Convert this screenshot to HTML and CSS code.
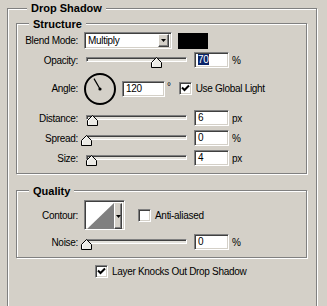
FILE: index.html
```html
<!DOCTYPE html>
<html lang="en">
<head>
    <meta charset="UTF-8">
    <title>Drop Shadow</title>
    <link rel="stylesheet" href="styles.css">
</head>
<body>
    <div class="group outer">
        <div class="group-title">Drop Shadow</div>

        <div class="group structure">
            <div class="group-title">Structure</div>

            <div class="row row-blend">
                <span class="lbl">Blend Mode:</span>
                <div class="select">
                    <span class="select-text">Multiply</span>
                    <span class="drop-btn"><svg width="5" height="3" viewBox="0 0 5 3"><path d="M0 0h5L2.5 3z" fill="#000"/></svg></span>
                </div>
                <div class="swatch"></div>
            </div>

            <div class="row row-opacity">
                <span class="lbl">Opacity:</span>
                <div class="slider">
                    <div class="track"></div>
                    <svg class="thumb" style="left: 65px" width="11" height="11" viewBox="0 0 11 11"><path d="M0.5 10.5V5.5L5.5 0.5L10.5 5.5V10.5Z" fill="#ecebe6" stroke="#000"/><path d="M1.5 9.5V5.9L5.5 1.9" fill="none" stroke="#fff"/></svg>
                </div>
                <div class="field"><span class="sel">70</span></div>
                <span class="unit">%</span>
            </div>

            <div class="row row-angle">
                <span class="lbl">Angle:</span>
                <svg class="dial" width="34" height="34" viewBox="0 0 34 34">
                    <circle cx="17" cy="17" r="15" fill="none" stroke="#000" stroke-width="2"/>
                    <line x1="17" y1="17" x2="11" y2="6.6" stroke="#000" stroke-width="1.2"/>
                    <circle cx="17" cy="17" r="1.6" fill="#000"/>
                </svg>
                <div class="field field-wide">120</div>
                <span class="deg">°</span>
                <span class="check check-global"><svg width="9" height="9" viewBox="0 0 9 9"><path d="M1 3.5L3.5 6L8 1.5" fill="none" stroke="#000" stroke-width="2"/></svg></span>
                <span class="check-label">Use Global Light</span>
            </div>

            <div class="row row-distance">
                <span class="lbl">Distance:</span>
                <div class="slider">
                    <div class="track"></div>
                    <svg class="thumb" style="left: 1px" width="11" height="11" viewBox="0 0 11 11"><path d="M0.5 10.5V5.5L5.5 0.5L10.5 5.5V10.5Z" fill="#ecebe6" stroke="#000"/><path d="M1.5 9.5V5.9L5.5 1.9" fill="none" stroke="#fff"/></svg>
                </div>
                <div class="field">6</div>
                <span class="unit">px</span>
            </div>

            <div class="row row-spread">
                <span class="lbl">Spread:</span>
                <div class="slider">
                    <div class="track"></div>
                    <svg class="thumb" style="left: -5px" width="11" height="11" viewBox="0 0 11 11"><path d="M0.5 10.5V5.5L5.5 0.5L10.5 5.5V10.5Z" fill="#ecebe6" stroke="#000"/><path d="M1.5 9.5V5.9L5.5 1.9" fill="none" stroke="#fff"/></svg>
                </div>
                <div class="field">0</div>
                <span class="unit">%</span>
            </div>

            <div class="row row-size">
                <span class="lbl">Size:</span>
                <div class="slider">
                    <div class="track"></div>
                    <svg class="thumb" style="left: 0px" width="11" height="11" viewBox="0 0 11 11"><path d="M0.5 10.5V5.5L5.5 0.5L10.5 5.5V10.5Z" fill="#ecebe6" stroke="#000"/><path d="M1.5 9.5V5.9L5.5 1.9" fill="none" stroke="#fff"/></svg>
                </div>
                <div class="field">4</div>
                <span class="unit">px</span>
            </div>
        </div>

        <div class="group quality">
            <div class="group-title">Quality</div>

            <div class="row row-contour">
                <span class="lbl">Contour:</span>
                <div class="contour">
                    <svg class="curve" width="27" height="26" viewBox="0 0 27 26"><rect width="27" height="26" fill="#fff"/><path d="M0 26L27 0V26Z" fill="#808080"/></svg>
                    <span class="contour-btn"><svg width="5" height="3" viewBox="0 0 5 3"><path d="M0 0h5L2.5 3z" fill="#000"/></svg></span>
                </div>
                <span class="check check-aa"></span>
                <span class="check-label">Anti-aliased</span>
            </div>

            <div class="row row-noise">
                <span class="lbl">Noise:</span>
                <div class="slider">
                    <div class="track"></div>
                    <svg class="thumb" style="left: -5px" width="11" height="11" viewBox="0 0 11 11"><path d="M0.5 10.5V5.5L5.5 0.5L10.5 5.5V10.5Z" fill="#ecebe6" stroke="#000"/><path d="M1.5 9.5V5.9L5.5 1.9" fill="none" stroke="#fff"/></svg>
                </div>
                <div class="field">0</div>
                <span class="unit">%</span>
            </div>
        </div>

        <div class="row row-knock">
            <span class="check"><svg width="9" height="9" viewBox="0 0 9 9"><path d="M1 3.5L3.5 6L8 1.5" fill="none" stroke="#000" stroke-width="2"/></svg></span>
            <span class="check-label">Layer Knocks Out Drop Shadow</span>
        </div>
    </div>
</body>
</html>
```

FILE: styles.css
```css
* {
    box-sizing: border-box;
}

body {
    margin: 0;
    padding-top: 8px;
    background: #d4d0c8;
    font-family: "Liberation Sans", Arial, sans-serif;
    font-size: 10px;
    letter-spacing: -0.3px;
    color: #000;
    overflow: hidden;
}

/* etched group boxes */
.group {
    border: 1px solid #808080;
    box-shadow: inset 1px 1px 0 #fff, 1px 1px 0 #fff;
}

.group-title {
    width: max-content;
    padding: 0 4px;
    background: #d4d0c8;
    font-size: 11px;
    font-weight: bold;
    letter-spacing: 0;
    line-height: 14px;
}

/* the outer box runs past the bottom of the window */
.outer {
    width: 310px;
    height: 298px;
    margin-left: 7px;
    padding: 0 9px 0 8px;
    border-bottom: 0;
}

.outer > .group-title {
    margin: -8px 0 0 11px;
}

.structure {
    margin-top: 8px;
    padding-bottom: 7px;
}

.quality {
    margin-top: 16px;
    padding-bottom: 7px;
}

.structure > .group-title,
.quality > .group-title {
    margin: -7px 0 0 12px;
}

/* rows */
.row {
    display: flex;
    align-items: center;
    height: 16px;
}

.row-blend { margin-top: 1px; height: 17px; }
.row-opacity { margin-top: 3px; }
.row-angle { margin-top: 4px; height: 33px; }
.row-distance { margin-top: 5px; }
.row-spread { margin-top: 4px; }
.row-size { margin-top: 4px; }
.row-contour { margin-top: 2px; height: 30px; }
.row-noise { margin-top: 4px; }
.row-knock { margin-top: 6px; height: 14px; padding-left: 79px; }

.lbl {
    flex: none;
    width: 61px;
    margin-right: 6px;
    text-align: right;
}

/* sunken controls */
.select,
.field,
.check,
.contour {
    border: 1px solid;
    border-color: #808080 #fff #fff #808080;
    box-shadow: inset 1px 1px 0 #404040, inset -1px -1px 0 #d4d0c8;
    background: #fff;
}

.select {
    display: flex;
    align-items: center;
    justify-content: space-between;
    width: 88px;
    height: 17px;
    padding: 2px 2px 2px 3px;
}

.drop-btn,
.contour-btn {
    display: flex;
    align-items: center;
    justify-content: center;
    border: 1px solid;
    border-color: #fff #404040 #404040 #fff;
    box-shadow: inset -1px -1px 0 #808080;
    background: #d4d0c8;
}

.drop-btn {
    width: 11px;
    height: 13px;
}

.swatch {
    width: 30px;
    height: 16px;
    margin-left: 6px;
    background: #000;
}

/* sliders */
.slider {
    position: relative;
    flex: none;
    width: 101px;
    height: 16px;
    margin-left: 2px;
}

.track {
    height: 5px;
    margin-top: 5px;
    border: 1px solid;
    border-color: #808080 #fff #fff #808080;
    box-shadow: inset 1px 1px 0 #404040;
    background: #e4e2dc;
}

.thumb {
    position: absolute;
    top: 5px;
}

.field {
    flex: none;
    width: 35px;
    height: 16px;
    margin-left: 7px;
    padding-left: 3px;
    line-height: 14px;
}

.field-wide {
    width: 43px;
    margin-left: 5px;
}

.sel {
    background: #0a246a;
    color: #fff;
}

.unit {
    margin-left: 3px;
}

.dial {
    flex: none;
    margin-left: -1px;
}

.deg {
    margin-left: 2px;
    margin-bottom: 4px;
}

/* checkboxes */
.check {
    display: flex;
    align-items: center;
    justify-content: center;
    flex: none;
    width: 13px;
    height: 13px;
}

.check-global {
    margin-left: 8px;
}

.check-aa {
    margin-left: 13px;
}

.check-label {
    margin-left: 4px;
    white-space: nowrap;
}

/* contour picker */
.contour {
    display: flex;
    width: 41px;
    height: 30px;
    padding: 2px;
}

.curve {
    flex: none;
}

.contour-btn {
    width: 10px;
    height: 26px;
    border-color: #d4d0c8 #404040 #404040 #fff;
}
```
